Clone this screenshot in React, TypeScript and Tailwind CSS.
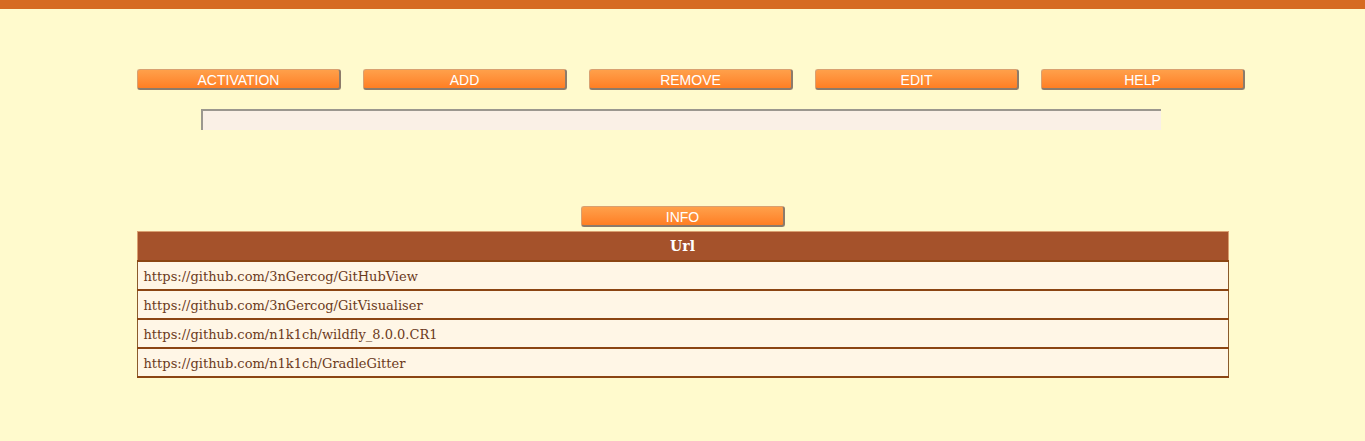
import { FC } from 'react';

const actions = ['ACTIVATION', 'ADD', 'REMOVE', 'EDIT', 'HELP'];

const repos = [
  'https://github.com/3nGercog/GitHubView',
  'https://github.com/3nGercog/GitVisualiser',
  'https://github.com/n1k1ch/wildfly_8.0.0.CR1',
  'https://github.com/n1k1ch/GradleGitter',
];

const OrangeButton: FC<{ label: string }> = ({ label }) => (
  <button
    type="button"
    className="h-[21px] w-[204px] rounded-[3px] border border-[#d9a070] border-r-2 border-b-2 border-r-[#8c7b6b] border-b-[#8c7b6b] bg-gradient-to-b from-[#ffa04a] to-[#ff7e22] pt-px text-[14px] leading-[18px] text-white font-['Liberation_Sans',Arial,sans-serif]"
  >
    {label}
  </button>
);

const App: FC = () => {
  return (
    <div className="min-h-[441px] bg-[#fffacd]">
      <div className="h-[9px] bg-[#d66b22]" />

      <section className="pt-[60px]">
        <div className="flex gap-[22px] pl-[137px]">
          {actions.map((label) => (
            <OrangeButton key={label} label={label} />
          ))}
        </div>

        <div className="mt-[19px] flex pl-[201px]">
          <input
            type="text"
            className="h-[21px] w-[960px] border-t-2 border-l-2 border-t-[#9b978f] border-l-[#9b978f] bg-[#faf0e6] outline-none"
          />
        </div>
      </section>

      <section className="mt-[74px] flex flex-col items-center">
        <div className="pl-px">
          <OrangeButton label="INFO" />
        </div>

        <table className="mt-[3px] w-[1092px] border-collapse font-['DejaVu_Serif',Georgia,serif] text-[13px] text-[#6b3a1c]">
          <thead>
            <tr>
              <th className="h-[29px] border border-[#d9a070] bg-[#a5522b] pt-px text-center text-[14px] font-bold text-white">
                Url
              </th>
            </tr>
          </thead>
          <tbody>
            {repos.map((url) => (
              <tr key={url}>
                <td className="h-[29px] border-2 border-x border-[#8b4513] border-x-[#8b5a2b] bg-[#fff6e6] px-[6px] pt-[3px] text-left">
                  {url}
                </td>
              </tr>
            ))}
          </tbody>
        </table>
      </section>
    </div>
  );
};

export default App;
